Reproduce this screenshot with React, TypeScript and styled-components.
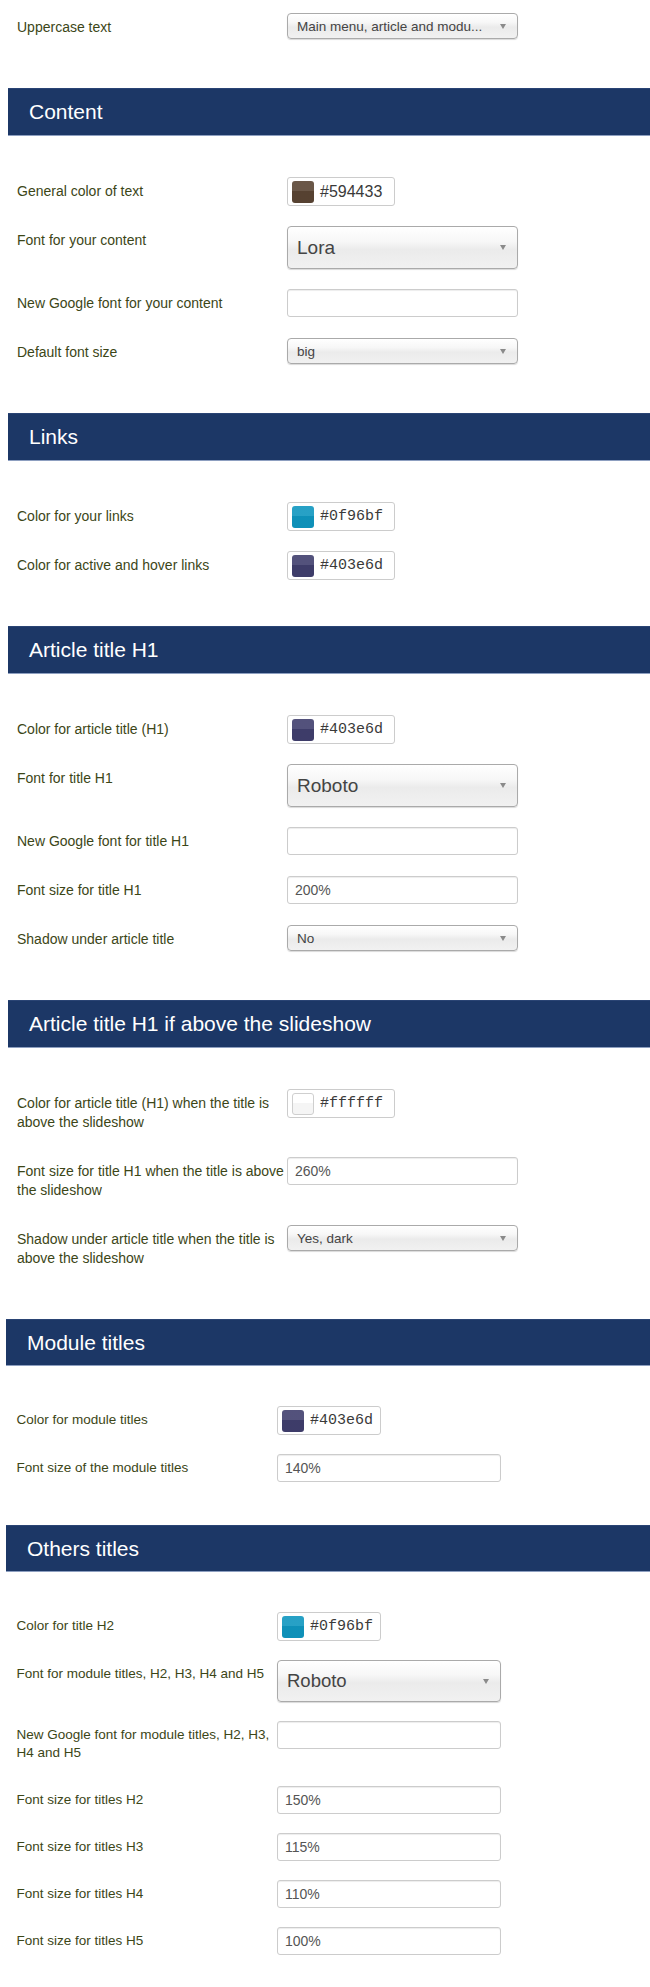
import React from "react";
import styled, { createGlobalStyle, css } from "styled-components";

type Field =
  | { kind: "color"; label: string; value: string; swatch: string; mono?: boolean }
  | { kind: "select"; label: string; value: string; big?: boolean }
  | { kind: "input"; label: string; value?: string };

interface SectionData {
  title?: string;
  compact?: boolean;
  fields: Field[];
}

const sections: SectionData[] = [
  {
    fields: [{ kind: "select", label: "Uppercase text", value: "Main menu, article and modu..." }],
  },
  {
    title: "Content",
    fields: [
      { kind: "color", label: "General color of text", value: "#594433", swatch: "#594433" },
      { kind: "select", label: "Font for your content", value: "Lora", big: true },
      { kind: "input", label: "New Google font for your content" },
      { kind: "select", label: "Default font size", value: "big" },
    ],
  },
  {
    title: "Links",
    fields: [
      { kind: "color", label: "Color for your links", value: "#0f96bf", swatch: "#0f96bf", mono: true },
      { kind: "color", label: "Color for active and hover links", value: "#403e6d", swatch: "#403e6d", mono: true },
    ],
  },
  {
    title: "Article title H1",
    fields: [
      { kind: "color", label: "Color for article title (H1)", value: "#403e6d", swatch: "#403e6d", mono: true },
      { kind: "select", label: "Font for title H1", value: "Roboto", big: true },
      { kind: "input", label: "New Google font for title H1" },
      { kind: "input", label: "Font size for title H1", value: "200%" },
      { kind: "select", label: "Shadow under article title", value: "No" },
    ],
  },
  {
    title: "Article title H1 if above the slideshow",
    fields: [
      {
        kind: "color",
        label: "Color for article title (H1) when the title is above the slideshow",
        value: "#ffffff",
        swatch: "#ffffff",
        mono: true,
      },
      { kind: "input", label: "Font size for title H1 when the title is above the slideshow", value: "260%" },
      { kind: "select", label: "Shadow under article title when the title is above the slideshow", value: "Yes, dark" },
    ],
  },
  {
    title: "Module titles",
    compact: true,
    fields: [
      { kind: "color", label: "Color for module titles", value: "#403e6d", swatch: "#403e6d", mono: true },
      { kind: "input", label: "Font size of the module titles", value: "140%" },
    ],
  },
  {
    title: "Others titles",
    compact: true,
    fields: [
      { kind: "color", label: "Color for title H2", value: "#0f96bf", swatch: "#0f96bf", mono: true },
      { kind: "select", label: "Font for module titles, H2, H3, H4 and H5", value: "Roboto", big: true },
      { kind: "input", label: "New Google font for module titles, H2, H3, H4 and H5" },
      { kind: "input", label: "Font size for titles H2", value: "150%" },
      { kind: "input", label: "Font size for titles H3", value: "115%" },
      { kind: "input", label: "Font size for titles H4", value: "110%" },
      { kind: "input", label: "Font size for titles H5", value: "100%" },
    ],
  },
];

const renderControl = (field: Field) => {
  switch (field.kind) {
    case "color":
      return (
        <ColorField>
          <Swatch $color={field.swatch} $light={field.swatch === "#ffffff"} />
          <ColorValue $mono={field.mono}>{field.value}</ColorValue>
        </ColorField>
      );
    case "select":
      return (
        <Select $big={field.big}>
          <span>{field.value}</span>
          <Arrow />
        </Select>
      );
    default:
      return <TextInput readOnly defaultValue={field.value ?? ""} />;
  }
};

export default function App() {
  return (
    <>
      <GlobalStyle />
      <Page>
        {sections.map((section, i) => (
          <Section key={i} $compact={section.compact}>
            {section.title && <Header>{section.title}</Header>}
            <Fields $headless={!section.title}>
              {section.fields.map((field, j) => (
                <Row key={j}>
                  <Label>{field.label}</Label>
                  <div>{renderControl(field)}</div>
                </Row>
              ))}
            </Fields>
          </Section>
        ))}
      </Page>
    </>
  );
}

const GlobalStyle = createGlobalStyle`
  html, body {
    margin: 0;
    padding: 0;
    background: #ffffff;
  }
  body {
    font-family: "Liberation Sans", Arial, sans-serif;
  }
`;

const Page = styled.div`
  width: 650px;
  padding: 13px 0 34px;
  box-sizing: border-box;
`;

// the last two blocks were captured slightly smaller in the source, so they get their own metrics
const Section = styled.section<{ $compact?: boolean }>`
  --label-left: 17px;
  --label-w: 270px;
  --label-size: 14px;
  --control-w: 231px;
  --color-w: 108px;
  --row-gap: 20px;
  --line: 19px;
  --head-left: 7.5px;
  --head-h: 48px;
  --head-pad: 21.5px;
  --fields-top: 41px;
  --fields-bottom: 46px;
  --big-h: 43px;
  --big-size: 19px;

  ${(props) =>
    props.$compact &&
    css`
      --label-left: 16.5px;
      --label-w: 260.5px;
      --label-size: 13.5px;
      --control-w: 224px;
      --color-w: 104px;
      --row-gap: 19px;
      --line: 18px;
      --head-left: 6px;
      --head-h: 47px;
      --head-pad: 21px;
      --fields-top: 40px;
      --fields-bottom: 43px;
      --big-h: 42px;
      --big-size: 18.5px;
    `}
`;

const Header = styled.h2`
  margin: 0 0 0 var(--head-left);
  height: var(--head-h);
  box-sizing: border-box;
  display: flex;
  align-items: center;
  padding-left: var(--head-pad);
  background: #1c3766;
  border-top: 1px solid #2a4474;
  border-bottom: 1px solid #8d9fc0;
  color: #ffffff;
  font-size: 21px;
  font-weight: normal;
`;

const Fields = styled.div<{ $headless?: boolean }>`
  display: flex;
  flex-direction: column;
  gap: var(--row-gap);
  padding: ${(props) => (props.$headless ? "0" : "var(--fields-top)")} 0 var(--fields-bottom)
    var(--label-left);
`;

const Row = styled.div`
  display: grid;
  grid-template-columns: var(--label-w) var(--control-w);
  align-items: start;
`;

const Label = styled.div`
  font-size: var(--label-size);
  line-height: var(--line);
  padding: 5px 0;
  color: #3c4617;
`;

const Select = styled.div<{ $big?: boolean }>`
  height: ${(props) => (props.$big ? "var(--big-h)" : "26px")};
  box-sizing: border-box;
  display: flex;
  align-items: center;
  justify-content: space-between;
  padding: 0 11px 0 9px;
  border: 1px solid #aaaaaa;
  border-radius: 4px;
  background: linear-gradient(to bottom, #ffffff 0%, #f7f7f7 35%, #ebebeb 55%, #f1f1f1 100%);
  box-shadow: 0 1px 1px rgba(0, 0, 0, 0.15), inset 0 1px 0 #ffffff;
  color: #444444;
  font-size: ${(props) => (props.$big ? "var(--big-size)" : "13.5px")};
  white-space: nowrap;
`;

const Arrow = styled.i`
  width: 0;
  height: 0;
  border-left: 3px solid transparent;
  border-right: 3px solid transparent;
  border-top: 5px solid #8a8a8a;
`;

const TextInput = styled.input`
  display: block;
  width: 100%;
  height: 28px;
  box-sizing: border-box;
  margin: 0;
  padding: 0 7px;
  border: 1px solid #cccccc;
  border-radius: 3px;
  box-shadow: inset 0 1px 1px rgba(0, 0, 0, 0.075);
  background: #ffffff;
  color: #555555;
  font-family: "Liberation Sans", Arial, sans-serif;
  font-size: 14px;
  outline: none;
`;

const ColorField = styled.div`
  width: var(--color-w);
  height: 29px;
  box-sizing: border-box;
  display: flex;
  align-items: center;
  gap: 6px;
  padding-left: 4px;
  border: 1px solid #cccccc;
  border-radius: 3px;
  background: #ffffff;
`;

const Swatch = styled.span<{ $color: string; $light?: boolean }>`
  flex: none;
  width: 22px;
  height: 22px;
  box-sizing: border-box;
  border-radius: 3px;
  border: ${(props) => (props.$light ? "1px solid #cfcfcf" : "none")};
  background: linear-gradient(
      to bottom,
      rgba(255, 255, 255, 0.1) 0%,
      rgba(255, 255, 255, 0.1) 45%,
      rgba(0, 0, 0, 0.04) 45%,
      rgba(0, 0, 0, 0.04) 100%
    ),
    ${(props) => props.$color};
`;

const ColorValue = styled.span<{ $mono?: boolean }>`
  color: #3a3a3a;
  font-family: ${(props) =>
    props.$mono ? `"Liberation Mono", "DejaVu Sans Mono", monospace` : `"Liberation Sans", Arial, sans-serif`};
  font-size: ${(props) => (props.$mono ? "15px" : "16px")};
`;
